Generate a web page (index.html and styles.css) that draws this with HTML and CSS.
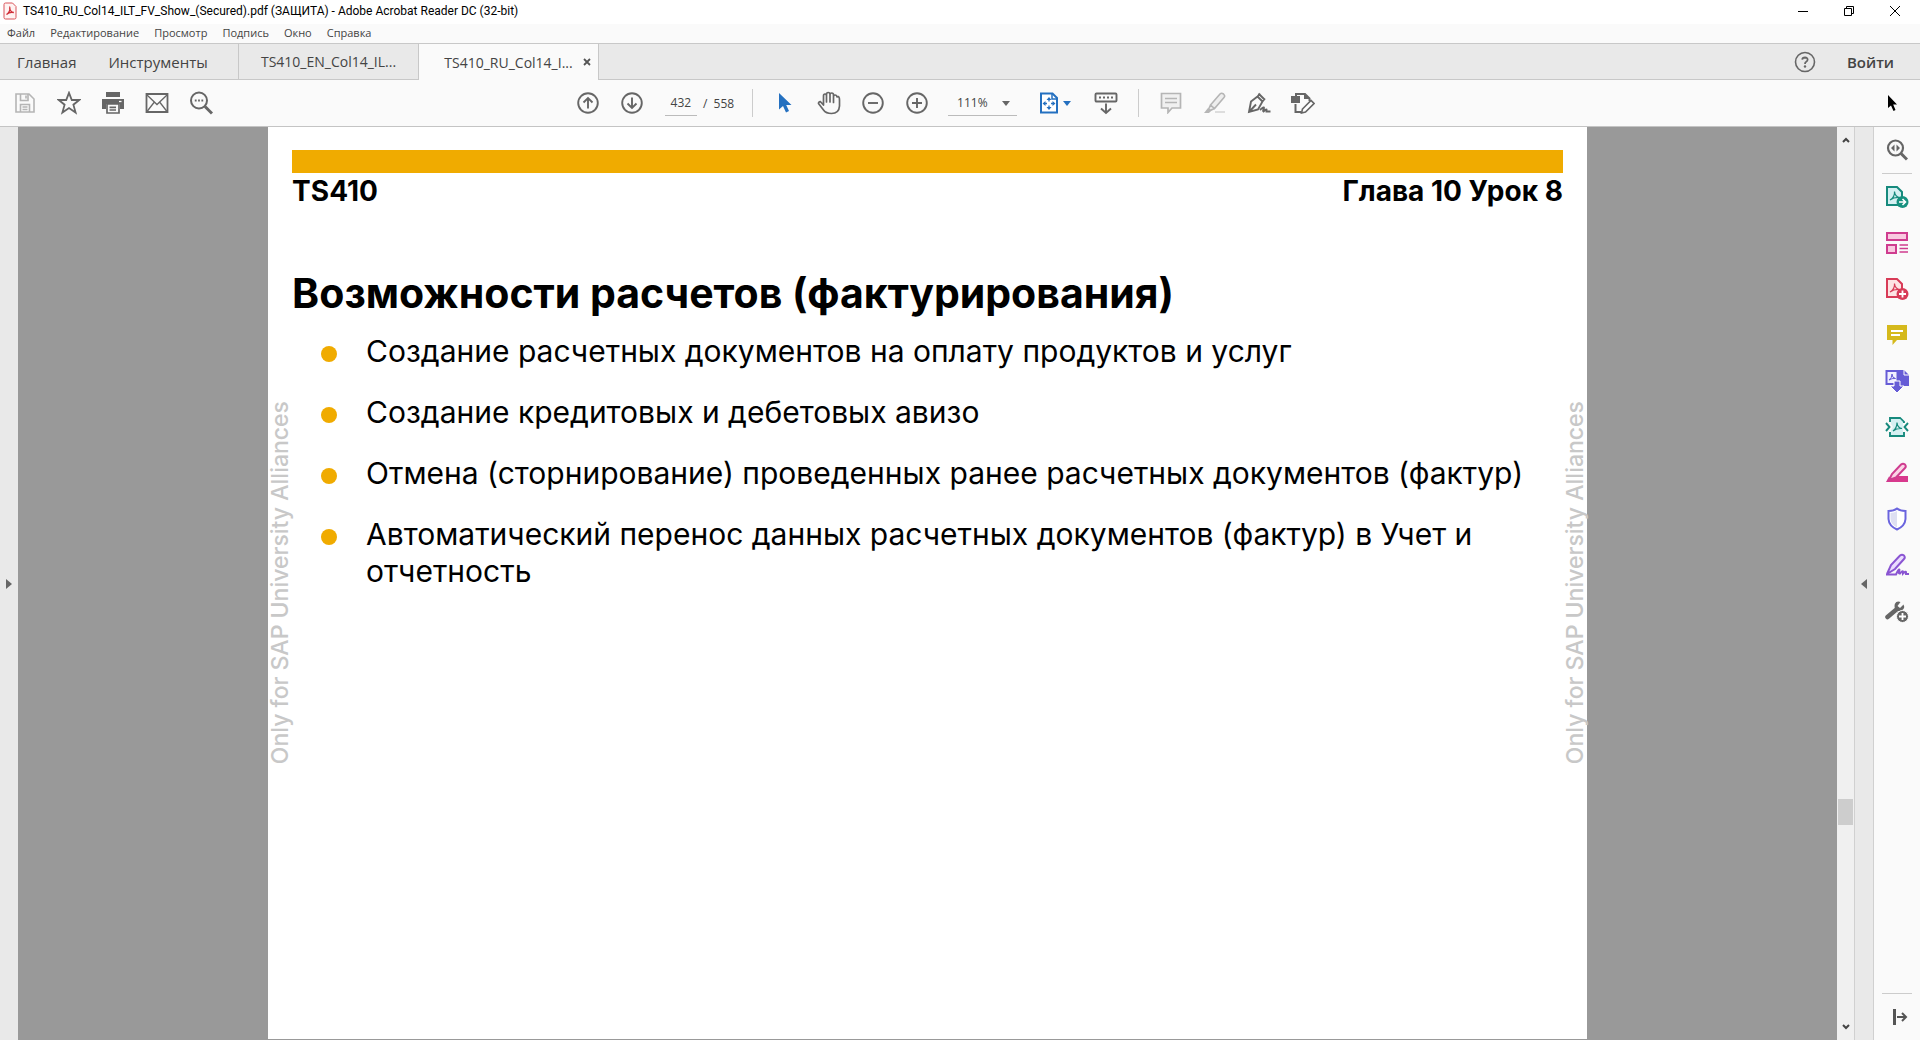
FILE: index.html
```html
<!DOCTYPE html>
<html lang="ru">
<head>
  <meta charset="UTF-8">
  <title>TS410_RU_Col14_ILT_FV_Show_(Secured).pdf (ЗАЩИТА) - Adobe Acrobat Reader DC (32-bit)</title>
  <link rel="stylesheet" href="styles.css">
</head>
<body>

  <!-- Title bar -->
  <header class="title-bar">
    <svg class="app-icon" width="14" height="18" viewBox="0 0 14 18">
      <path d="M1 2.500Q1 1 2.500 1H9.500L13 4.500V15.500Q13 17 11.500 17H2.500Q1 17 1 15.500Z" fill="#fff3f2" stroke="#d9545a"/>
      <path d="M3.500 12.500C6 11 7.500 7.500 6.800 5.500C6.200 7 8 10.500 10.800 10.500C8 10 5 11 3.500 12.500Z" fill="none" stroke="#cf2f38" stroke-width="1.300"/>
    </svg>
    <span class="window-title">TS410_RU_Col14_ILT_FV_Show_(Secured).pdf (ЗАЩИТА) - Adobe Acrobat Reader DC (32-bit)</span>
    <div class="window-buttons">
      <button type="button" aria-label="Свернуть"><svg width="12" height="12" viewBox="0 0 12 12"><path d="M1 6.500H11"/></svg></button>
      <button type="button" aria-label="Восстановить"><svg width="12" height="12" viewBox="0 0 12 12"><path d="M1.500 3.500H8.500V10.500H1.500ZM3.500 3.500V1.500H10.500V8.500H8.500"/></svg></button>
      <button type="button" aria-label="Закрыть"><svg width="12" height="12" viewBox="0 0 12 12"><path d="M1 1L11 11M11 1L1 11"/></svg></button>
    </div>
  </header>

  <!-- Menu -->
  <nav class="menu-bar">
    <a href="#">Файл</a>
    <a href="#">Редактирование</a>
    <a href="#">Просмотр</a>
    <a href="#">Подпись</a>
    <a href="#">Окно</a>
    <a href="#">Справка</a>
  </nav>

  <!-- Tabs -->
  <div class="tab-bar">
    <div class="views">
      <button type="button">Главная</button>
      <button type="button">Инструменты</button>
    </div>
    <button type="button" class="doc-tab">TS410_EN_Col14_IL...</button>
    <div class="doc-tab active">
      <button type="button">TS410_RU_Col14_I...</button>
      <button type="button" class="tab-close" aria-label="Закрыть вкладку"><svg width="8" height="8" viewBox="0 0 8 8"><path d="M1 1L7 7M7 1L1 7" stroke="#555" stroke-width="1.800"/></svg></button>
    </div>
    <div class="account">
      <button type="button" class="help" aria-label="Справка"><svg width="22" height="22" viewBox="0 0 22 22"><circle cx="11" cy="11" r="9.500" fill="none" stroke="#666" stroke-width="1.600"/><path d="M8.200 8.600Q8.400 6.500 11 6.500Q13.700 6.600 13.600 8.700Q13.500 10 12.200 10.800Q11 11.500 11 13" fill="none" stroke="#666" stroke-width="1.800"/><circle cx="11" cy="15.500" r="1.200" fill="#666"/></svg></button>
      <button type="button" class="sign-in">Войти</button>
    </div>
  </div>

  <!-- Toolbar -->
  <div class="toolbar">
    <div class="tool-group">
      <button type="button" class="tool" aria-label="Сохранить">
        <svg width="22" height="22" viewBox="0 0 22 22" fill="none" stroke="#b5b5b5" stroke-width="1.600"><path d="M2 2H15L20 7V20H2Z"/><path d="M6.500 2V8.500H14V2M12 3.500V6.500M6.500 20V12.500H15.500V20M8.500 15H13.500M8.500 17.500H13.500"/></svg>
      </button>
      <button type="button" class="tool" aria-label="Избранное">
        <svg width="24" height="24" viewBox="0 0 24 24" fill="none" stroke="#666" stroke-width="1.800"><path d="M12 1.800L14.800 9H22.300L16.400 13.700L18.600 21.500L12 17L5.400 21.500L7.600 13.700L1.700 9H9.200Z"/></svg>
      </button>
      <button type="button" class="tool" aria-label="Печать">
        <svg width="24" height="24" viewBox="0 0 24 24"><path d="M5 1H19V6H5ZM1 8H23V18H19V13H5V18H1Z" fill="#666"/><path d="M6 13H18V22H6ZM8.500 16.300H15M8.500 19H15" fill="none" stroke="#666" stroke-width="1.700"/><path d="M18 10.500H20.500" stroke="#fff" stroke-width="1.300"/></svg>
      </button>
      <button type="button" class="tool" aria-label="Отправить по почте">
        <svg width="24" height="20" viewBox="0 0 24 20" fill="none" stroke="#666" stroke-width="1.800"><path d="M1.500 1H22.500V19H1.500Z"/><path d="M2 2L12 11.500L22 2M2 18.500L9 9.500M22 18.500L15 9.500" stroke-width="1.300"/></svg>
      </button>
      <button type="button" class="tool" aria-label="Найти">
        <svg width="24" height="24" viewBox="0 0 24 24" fill="none" stroke="#666" stroke-width="2"><circle cx="10" cy="9.500" r="8"/><path d="M16 15.500L23 22.500" stroke-width="3"/><path d="M5.800 9.500H7.600M9.100 9.500H10.900M12.400 9.500H14.200"/></svg>
      </button>
    </div>

    <div class="tool-group">
      <button type="button" class="tool" aria-label="Предыдущая страница">
        <svg width="22" height="22" viewBox="0 0 22 22" fill="none" stroke="#666" stroke-width="1.900"><circle cx="11" cy="11" r="9.800"/><path d="M11 16.500V6.500M6.500 10.500L11 6L15.500 10.500"/></svg>
      </button>
      <button type="button" class="tool" aria-label="Следующая страница">
        <svg width="22" height="22" viewBox="0 0 22 22" fill="none" stroke="#666" stroke-width="1.900"><circle cx="11" cy="11" r="9.800"/><path d="M11 5.500V15.500M6.500 11.500L11 16L15.500 11.500"/></svg>
      </button>
      <div class="page-number">
        <input type="text" id="page" value="432">
        <label for="page">/&nbsp; 558</label>
      </div>
      <span class="divider"></span>
      <button type="button" class="tool" aria-label="Выделение">
        <svg width="16" height="22" viewBox="0 0 16 22"><path d="M2 1V17.500L6 14L9 20.500L12 19L9.200 13H14.500Z" fill="#2470c0"/></svg>
      </button>
      <button type="button" class="tool" aria-label="Рука">
        <svg width="24" height="24" viewBox="0 0 24 24" fill="none" stroke="#666" stroke-width="1.700" stroke-linejoin="round" stroke-linecap="round"><path d="M6.500 14V5Q6.500 3 8 3Q9.500 3 9.500 5V11V3.500Q9.500 1.500 11.200 1.500Q13 1.500 13 3.500V11V3.500Q13 2 14.700 2Q16.500 2 16.500 4V11.500V6Q16.500 4 18 4Q19.800 4 20 6L21.500 5.500Q22.700 7 22.500 9V15Q22 22.500 14.500 22.500Q9 22.500 6.500 19L1.500 12.500Q1.500 10.500 3.500 10.700L6.500 14"/></svg>
      </button>
      <button type="button" class="tool" aria-label="Уменьшить">
        <svg width="22" height="22" viewBox="0 0 22 22" fill="none" stroke="#666" stroke-width="1.900"><circle cx="11" cy="11" r="9.800"/><path d="M6 11H16"/></svg>
      </button>
      <button type="button" class="tool" aria-label="Увеличить">
        <svg width="22" height="22" viewBox="0 0 22 22" fill="none" stroke="#666" stroke-width="1.900"><circle cx="11" cy="11" r="9.800"/><path d="M6 11H16M11 6V16"/></svg>
      </button>
      <div class="zoom">
        <select aria-label="Масштаб">
          <option>111%</option>
        </select>
        <svg class="zoom-arrow" width="8" height="5" viewBox="0 0 8 5"><path d="M0 0H8L4 5Z" fill="#666"/></svg>
      </div>
      <button type="button" class="tool fit" aria-label="По ширине окна">
        <svg width="32" height="22" viewBox="0 0 32 22"><path d="M2 1.500H13.500L18 6V20.500H2Z" fill="#fff" stroke="#2470c0" stroke-width="2"/><path d="M13 2V7H18" fill="none" stroke="#2470c0" stroke-width="1.500"/><path d="M10 5L12.500 8H7.500ZM10 18L12.500 15H7.500ZM3.500 11.500L6.500 9V14ZM16.500 11.500L13.500 9V14Z" fill="#2470c0"/><path d="M10 7V9.500M10 13.500V16M5.500 11.500H8M12 11.500H14.500" stroke="#2470c0" stroke-width="1.300"/><path d="M24 9H32L28 14Z" fill="#2470c0"/></svg>
      </button>
      <button type="button" class="tool" aria-label="Показать панель">
        <svg width="24" height="24" viewBox="0 0 24 24" fill="none" stroke="#666" stroke-width="1.900"><rect x="1.500" y="2.500" width="21" height="8" rx="1"/><path d="M5 6.500H7M9 6.500H11M13 6.500H15M17 6.500H19M12 12.500V22M7 17.500L12 22L17 17.500"/></svg>
      </button>
      <span class="divider"></span>
      <button type="button" class="tool" aria-label="Комментарий">
        <svg width="22" height="22" viewBox="0 0 22 22"><path d="M1.500 1.500H20.500V16H12L8 20.500V16H1.500Z" fill="#f0f0f0" stroke="#b5b5b5" stroke-width="1.700"/><path d="M5 6.500H17M5 10.500H17" stroke="#b5b5b5" stroke-width="1.500"/></svg>
      </button>
      <button type="button" class="tool" aria-label="Выделить текст">
        <svg width="24" height="22" viewBox="0 0 24 22"><path d="M7.500 13L17 2Q18.500 .500 20.500 2Q22.500 4 21 5.500L11.500 16.500ZM7.500 13L5.500 17.500L7 18.500L11.500 16.500" fill="#eee" stroke="#b5b5b5" stroke-width="1.600"/><path d="M5 16L1 21H6L8.500 18.500Z" fill="#b5b5b5"/><path d="M12 20H22" stroke="#ddd" stroke-width="2"/></svg>
      </button>
      <button type="button" class="tool" aria-label="Подписать">
        <svg width="24" height="22" viewBox="0 0 24 22" fill="none" stroke="#666" stroke-width="1.900"><path d="M2 20L4 9.500L10.500 4.500L15.500 9.500L11 17.500ZM2 20L9 12.500M10.500 4.500L13 1.500M15.500 9.500L18 6.500M11.500 1.500L17.500 7.500M13 18Q17 14 17 16Q15.500 19 16.500 19.500Q19 17 19.500 17.500V19.500H23.500"/></svg>
      </button>
      <button type="button" class="tool" aria-label="Редактировать">
        <svg width="24" height="22" viewBox="0 0 24 22"><path d="M13 1V7H19ZM0 4H9V11H0Z" fill="#666"/><path d="M4.500 12V20H10M5 4V2H14L18.500 6.500V9" fill="none" stroke="#666" stroke-width="2"/><path d="M11.500 17L20 8.500L23 11.500L14.500 20L10.500 21Z" fill="#fff" stroke="#666" stroke-width="1.600"/></svg>
      </button>
    </div>

    <svg class="pointer" width="11" height="18" viewBox="0 0 11 18"><path d="M1 1V14L4 11.500L6.500 17L8.500 16L6.200 10.500H10Z" fill="#000"/></svg>
  </div>

  <!-- Document and side panels -->
  <main class="workspace">
    <button type="button" class="pane-toggle left" aria-label="Панель навигации"><svg width="6" height="10" viewBox="0 0 6 10"><path d="M0 0V10L6 5Z" fill="#666"/></svg></button>

    <div class="viewer">
      <article class="page">
        <span class="watermark">Only for SAP University Alliances</span>
        <div class="slide">
          <div class="slide-bar"></div>
          <div class="slide-head">
            <span>TS410</span>
            <span>Глава 10 Урок 8</span>
          </div>
          <h1>Возможности расчетов (фактурирования)</h1>
          <ul>
            <li>Создание расчетных документов на оплату продуктов и услуг</li>
            <li>Создание кредитовых и дебетовых авизо</li>
            <li>Отмена (сторнирование) проведенных ранее расчетных документов (фактур)</li>
            <li>Автоматический перенос данных расчетных документов (фактур) в Учет и отчетность</li>
          </ul>
        </div>
        <span class="watermark">Only for SAP University Alliances</span>
      </article>
    </div>

    <div class="scrollbar">
      <button type="button" aria-label="Вверх"><svg width="8" height="6" viewBox="0 0 8 6"><path d="M1 5L4 2L7 5" fill="none" stroke="#444" stroke-width="2"/></svg></button>
      <div class="track"><div class="thumb"></div></div>
      <button type="button" aria-label="Вниз"><svg width="8" height="6" viewBox="0 0 8 6"><path d="M1 1L4 4L7 1" fill="none" stroke="#444" stroke-width="2"/></svg></button>
    </div>

    <button type="button" class="pane-toggle right" aria-label="Панель инструментов"><svg width="6" height="10" viewBox="0 0 6 10"><path d="M6 0V10L0 5Z" fill="#666"/></svg></button>

    <aside class="side-panel">
      <button type="button" aria-label="Поиск инструментов">
        <svg width="22" height="22" viewBox="0 0 22 22"><circle cx="9.500" cy="9" r="7.500" fill="none" stroke="#666" stroke-width="2.200"/><path d="M15 14.500L21 20.500" stroke="#666" stroke-width="3"/><path d="M8.500 5.500V12.500L5 9ZM10.500 5.500V12.500L14 9Z" fill="#666"/></svg>
      </button>
      <hr>
      <button type="button" aria-label="Экспорт PDF">
        <svg width="24" height="24" viewBox="0 0 24 24"><path d="M2 2H12L17 7V20H2Z" fill="#d5f0f2" stroke="#168a7d" stroke-width="2"/><path d="M5 15Q10 12 9.500 6.500Q10 12 15 12.500Q9 12 5 15" fill="none" stroke="#168a7d" stroke-width="1.200"/><circle cx="17.500" cy="17" r="6" fill="#16917f"/><path d="M14 17H20M17.500 14L20.500 17L17.500 20" fill="none" stroke="#fff" stroke-width="1.600"/></svg>
      </button>
      <button type="button" aria-label="Организовать страницы">
        <svg width="24" height="24" viewBox="0 0 24 24" stroke="#cf3c8f" stroke-width="2"><path d="M2 2H22V9H2ZM2 14H11V22H2Z" fill="#f9c9e0"/><path d="M14.500 14H23M14.500 17.500H23M14.500 21H23" stroke-width="1.400"/></svg>
      </button>
      <button type="button" aria-label="Создать PDF">
        <svg width="24" height="24" viewBox="0 0 24 24"><path d="M2 2H12L17 7V20H2Z" fill="#fde4e4" stroke="#d83b57" stroke-width="2"/><path d="M5 15Q10 12 9.500 6.500Q10 12 15 12.500Q9 12 5 15" fill="none" stroke="#d83b57" stroke-width="1.200"/><circle cx="17.500" cy="17" r="6" fill="#d83b57"/><path d="M14 17H21M17.500 13.500V20.500" stroke="#fff" stroke-width="1.800"/></svg>
      </button>
      <button type="button" aria-label="Добавить комментарии">
        <svg width="22" height="22" viewBox="0 0 22 22"><path d="M1 1H21V16H11L6.500 21V16H1Z" fill="#d5b91c"/><path d="M5 7H17M5 11H14" stroke="#fff" stroke-width="1.800"/></svg>
      </button>
      <button type="button" aria-label="Объединить файлы">
        <svg width="24" height="24" viewBox="0 0 24 24"><path d="M13 1H19L24 6V17H13Z" fill="#665cd6"/><path d="M19 1V6H24" fill="none" stroke="#fff"/><path d="M1.500 2H12.500V15H1.500Z" fill="#f1f0ff" stroke="#665cd6" stroke-width="2"/><path d="M4 11Q7 9 7 5Q7 9 10.500 9.500Q7 9 4 11" fill="none" stroke="#665cd6"/><path d="M9 12H15V17H19L12 24L5 17H9Z" fill="#665cd6" stroke="#fff"/></svg>
      </button>
      <button type="button" aria-label="Сжать PDF">
        <svg width="24" height="22" viewBox="0 0 24 22" fill="none" stroke="#168a7d" stroke-width="1.900"><path d="M5 6V2H15L19 6V7M5 16V20H19V16"/><path d="M6 3H15L18 6V19H6V14L8 11L6 8Z" fill="#d5f0f2" stroke="none"/><path d="M1 7L4.500 11L1 15M23 7L19.500 11L23 15"/><path d="M8 15Q12 12 12 6.500Q12.500 12 17 12.500Q12 12 8 15" stroke-width="1.200"/></svg>
      </button>
      <button type="button" aria-label="Исправить">
        <svg width="24" height="22" viewBox="0 0 24 22"><path d="M8 14H23V20H1Z" fill="#d8398d"/><path d="M4 18L7 12L16 2.500Q18 1 20 2.500Q21.500 4.500 20 6L11 15.500Z" fill="#fbd3e6" stroke="#cf3c8f" stroke-width="2"/><path d="M1 20L4 14.500L8 18Z" fill="#cf3c8f"/></svg>
      </button>
      <button type="button" aria-label="Защитить">
        <svg width="20" height="24" viewBox="0 0 20 24"><path d="M10 1.500Q13 4 18.500 4V12Q18 19 10 22.500Q2 19 1.500 12V4Q7 4 10 1.500Z" fill="#fff" stroke="#6a64de" stroke-width="2"/><path d="M10 4Q7 6 3.500 6V12Q4 17.500 10 20.500Z" fill="#dedff2"/></svg>
      </button>
      <button type="button" aria-label="Заполнить и подписать">
        <svg width="24" height="24" viewBox="0 0 24 24" fill="none" stroke="#8a55d2" stroke-width="2"><path d="M2 21L6 12L15 2.500Q17 1 19 2.500Q20.500 4.500 19 6L10 16L2 21" fill="#eadcff"/><path d="M1 21.500H11Q14 15 14.500 17Q13 21 15 20.500Q18 17 18 19V20.500Q21 17.500 21 19.500V21H24"/></svg>
      </button>
      <button type="button" aria-label="Другие инструменты">
        <svg width="24" height="24" viewBox="0 0 24 24"><path d="M2.500 18L12 10" stroke="#666" stroke-width="4.500" stroke-linecap="round"/><path d="M18.500 5.500L15 9L12.500 7L15.500 3Q11.500 1.500 9.800 5Q8.800 9 11.500 11.500Q16 13 18.500 10Q20 8 18.500 5.500Z" fill="#666"/><circle cx="17.500" cy="17.500" r="6" fill="#666" stroke="#fafafa"/><path d="M14 17.500H21M17.500 14V21" stroke="#fff" stroke-width="1.800"/></svg>
      </button>
      <hr class="bottom-rule">
      <button type="button" class="collapse" aria-label="Свернуть панель">
        <svg width="16" height="18" viewBox="0 0 16 18" fill="none" stroke="#555"><path d="M2.500 1V17" stroke-width="3"/><path d="M5 9H13M10 5L14 9L10 13" stroke-width="2"/></svg>
      </button>
    </aside>
  </main>

</body>
</html>
```
FILE: styles.css
```css
* {
  box-sizing: border-box;
}

body {
  margin: 0;
  height: 100vh;
  display: flex;
  flex-direction: column;
  overflow: hidden;
  font-family: "Open Sans", "Noto Sans", sans-serif;
  font-size: 12px;
  color: #444;
  background-color: #fafafa;
}

button {
  display: flex;
  align-items: center;
  justify-content: center;
  padding: 0;
  border: none;
  background: none;
  font: inherit;
  color: inherit;
}

/* Title bar */
.title-bar {
  display: flex;
  align-items: center;
  height: 24px;
  padding: 0 2px 2px 3px;
  background-color: #fff;
  font-family: Roboto, "Open Sans", sans-serif;
  color: #000;
}

.window-title {
  margin-left: 6px;
}

.window-buttons {
  display: flex;
  margin-left: auto;
}

.window-buttons button {
  width: 46px;
  height: 22px;
}

.window-buttons svg {
  fill: none;
  stroke: #000;
}

/* Menu */
.menu-bar {
  display: flex;
  gap: 15px;
  height: 19px;
  padding-left: 7px;
  font-size: 11px;
  line-height: 18px;
}

.menu-bar a {
  color: #444;
  text-decoration: none;
}

/* Tabs */
.tab-bar {
  display: flex;
  height: 37px;
  border-top: 1px solid #c8c8c8;
  border-bottom: 1px solid #c8c8c8;
  background-color: #e9e9e9;
  font-size: 14px;
}

.views {
  display: flex;
  gap: 32px;
  width: 239px;
  padding-left: 17px;
  border-right: 1px solid #c8c8c8;
  font-size: 15px;
}

.doc-tab {
  display: flex;
  align-items: center;
  justify-content: center;
  width: 180px;
  border-right: 1px solid #c8c8c8;
}

.doc-tab.active {
  gap: 8px;
  height: 36px;
  padding-left: 20px;
  background-color: #fafafa;
}

.tab-close {
  width: 12px;
  height: 12px;
}

.account {
  display: flex;
  align-items: center;
  gap: 31px;
  margin-left: auto;
  padding-right: 26px;
}

.sign-in {
  font-size: 15px;
  font-weight: 600;
}

/* Toolbar */
.toolbar {
  display: grid;
  grid-template-columns: 1fr auto 1fr;
  align-items: center;
  height: 47px;
  padding: 0 22px 0 3px;
  border-bottom: 1px solid #c4c4c4;
}

.tool-group {
  display: flex;
  align-items: center;
}

.tool-group:nth-child(2) {
  margin-right: 10px;
}

.tool {
  width: 44px;
  height: 44px;
}

.page-number {
  display: flex;
  align-items: center;
  gap: 6px;
  margin: 0 18px 0 11px;
}

.page-number input {
  width: 32px;
  height: 26px;
  padding: 0;
  border: none;
  border-bottom: 1px solid #bbb;
  background: none;
  font: inherit;
  color: inherit;
  text-align: center;
}

.divider {
  width: 1px;
  height: 28px;
  margin-right: 10px;
  background-color: #ccc;
}

.zoom {
  position: relative;
  margin: 0 16px 0 9px;
}

.zoom select {
  width: 69px;
  height: 26px;
  padding: 0 0 0 9px;
  border: none;
  border-bottom: 1px solid #bbb;
  border-radius: 0;
  background: none;
  appearance: none;
  font: inherit;
  color: inherit;
}

.zoom-arrow {
  position: absolute;
  top: 11px;
  right: 7px;
  pointer-events: none;
}

.fit {
  margin-right: 7px;
}

.tool + .divider {
  margin-left: 10px;
}

.pointer {
  justify-self: end;
}

/* Workspace */
.workspace {
  flex: 1;
  display: flex;
  min-height: 0;
}

.pane-toggle {
  width: 18px;
  background-color: #e9e9e9;
}

.pane-toggle.right {
  width: 20px;
  border-left: 1px solid #d0d0d0;
  border-right: 1px solid #d0d0d0;
}

.viewer {
  flex: 1;
  display: flex;
  justify-content: center;
  padding-bottom: 1px;
  background-color: #999;
}

.page {
  display: flex;
  width: 72.5%;
  background-color: #fff;
  font-family: Inter, "Noto Sans", sans-serif;
  color: #000;
}

.watermark {
  align-self: center;
  width: 24px;
  writing-mode: vertical-rl;
  transform: rotate(180deg);
  font-size: 23px;
  font-weight: 500;
  line-height: 24px;
  white-space: nowrap;
  color: #c8c8c8;
}

.slide {
  flex: 1;
  padding-top: 23px;
}

.slide-bar {
  height: 23px;
  background-color: #f0ab00;
}

.slide-head {
  display: flex;
  justify-content: space-between;
  font-size: 28px;
  font-weight: bold;
  line-height: 37px;
}

.slide h1 {
  margin: 55px 0 0;
  font-size: 41px;
  line-height: 56px;
}

.slide ul {
  margin: 12px 0 0;
  padding: 0;
  list-style: none;
  font-size: 30px;
  line-height: 37px;
}

.slide li {
  display: flex;
  gap: 29px;
  margin-bottom: 24px;
  padding-left: 29px;
}

.slide li::before {
  content: "";
  flex: none;
  width: 16px;
  height: 16px;
  margin-top: 13px;
  border-radius: 50%;
  background-color: #f0ab00;
}

/* Scrollbar */
.scrollbar {
  display: flex;
  flex-direction: column;
  width: 17px;
  background-color: #f0f0f0;
}

.scrollbar button {
  height: 26px;
}

.track {
  flex: 1;
  display: flex;
  flex-direction: column;
}

.track::before {
  content: "";
  height: 75%;
}

.thumb {
  height: 26px;
  margin: 0 1px;
  background-color: #cdcdcd;
}

/* Side panel */
.side-panel {
  display: flex;
  flex-direction: column;
  width: 46px;
  background-color: #fafafa;
}

.side-panel button {
  height: 46px;
}

.side-panel hr {
  width: 30px;
  height: 1px;
  margin: 0 auto;
  border: none;
  background-color: #ccc;
}

.side-panel .bottom-rule {
  margin-top: auto;
}

.side-panel .collapse {
  padding-left: 6px;
}
```
